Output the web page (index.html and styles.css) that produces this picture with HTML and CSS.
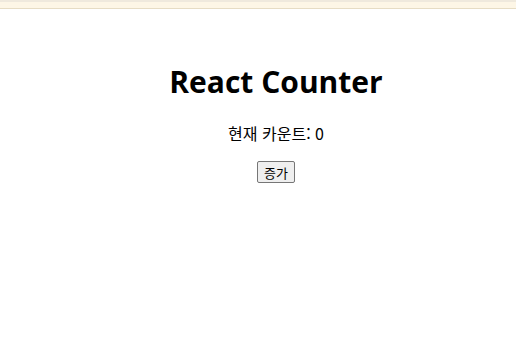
FILE: index.html
```html
<!DOCTYPE html>
<html lang="ko">
  <head>
    <meta charset="UTF-8" />
    <meta name="viewport" content="width=device-width, initial-scale=1.0" />
    <title>React Counter</title>
    <link rel="stylesheet" href="styles.css">
  </head>
  <body>
    <div class="top-bar"></div>
    <div id="root">
      <div class="app">
        <h1 class="title">React Counter</h1>
        <p class="count">현재 카운트: 0</p>
        <button class="inc-button">증가</button>
      </div>
    </div>
  </body>
</html>
```

FILE: styles.css
```css
body {
  margin: 0;
  background: #fff;
  font-family: "Noto Sans CJK KR", sans-serif;
  font-size: 16px;
  color: #000;
}
.top-bar {
  height: 6px;
  background: #fdf6e6;
  border-top: 2px solid #efe9dd;
  border-bottom: 1px solid #e6dcc4;
}
#root {
  padding: 8px;
}
.app {
  display: flex;
  flex-direction: column;
  align-items: center;
  padding-top: 44px;
  padding-left: 36px;
}
.title {
  margin: 0 0 21px;
  font-family: "Open Sans", sans-serif;
  font-size: 30px;
  line-height: 41px;
  font-weight: 700;
}
.count {
  margin: 0 0 18px;
  line-height: 20px;
}
.inc-button {
  font-family: "Noto Sans CJK KR", sans-serif;
  font-size: 13px;
  line-height: 17px;
  padding: 2px 6px 1px;
  border: 1px solid #767676;
  border-radius: 2px;
  background: #efefef;
}
```
